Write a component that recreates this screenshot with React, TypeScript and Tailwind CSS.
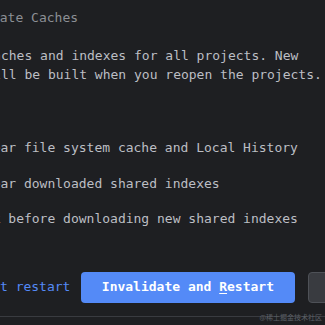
const mono = "font-['DejaVu_Sans_Mono','Liberation_Mono',monospace]";

const options = [
  "Clear file system cache and Local History",
  "Clear downloaded shared indexes",
  "Ask before downloading new shared indexes",
];

function Checkbox() {
  return (
    <span className="h-4 w-4 shrink-0 rounded-[3px] border border-[#5a5d63] bg-[#2b2d30]" />
  );
}

export default function App() {
  return (
    <div
      className={`relative h-[325px] w-[325px] overflow-hidden bg-[#1e1f22] text-[13px] ${mono}`}
    >
      <div className="-ml-[55px] whitespace-nowrap pt-[9px] leading-[18px] text-[#8c8f95]">
        Invalidate Caches
      </div>

      <div className="-ml-[69.5px] mt-[19px] whitespace-nowrap leading-[19px] text-[#bcbec4]">
        <div>Clears caches and indexes for all projects. New</div>
        <div>caches will be built when you reopen the projects.</div>
      </div>

      <div className="-ml-[47px] mt-[55px] flex flex-col gap-[17.5px] whitespace-nowrap leading-[18px] text-[#bcbec4]">
        {options.map((label) => (
          <label key={label} className="flex items-center gap-2">
            <Checkbox />
            <span>{label}</span>
          </label>
        ))}
      </div>

      <div className="-ml-[23.5px] mt-[43.5px] flex items-center whitespace-nowrap leading-[18px]">
        <span className="text-[#548af7]">Just restart</span>
        <button className="ml-[10.5px] h-[31px] w-[214px] shrink-0 rounded-[4px] bg-[#548af7] font-bold text-white">
          Invalidate and <span className="underline underline-offset-2">R</span>estart
        </button>
        <button className="ml-[13px] h-[31px] w-[90px] shrink-0 rounded-[4px] border border-[#4e5157] bg-[#393b40] text-[#dfe1e5]">
          Cancel
        </button>
      </div>

      <div className="mt-[13.5px] h-px w-full bg-[#393b40]" />

      <span className="absolute right-[3px] top-[312px] font-['Noto_Sans_CJK_SC',sans-serif] text-[7px] leading-[10px] text-[#5c5f66]">
        @稀土掘金技术社区
      </span>
    </div>
  );
}
